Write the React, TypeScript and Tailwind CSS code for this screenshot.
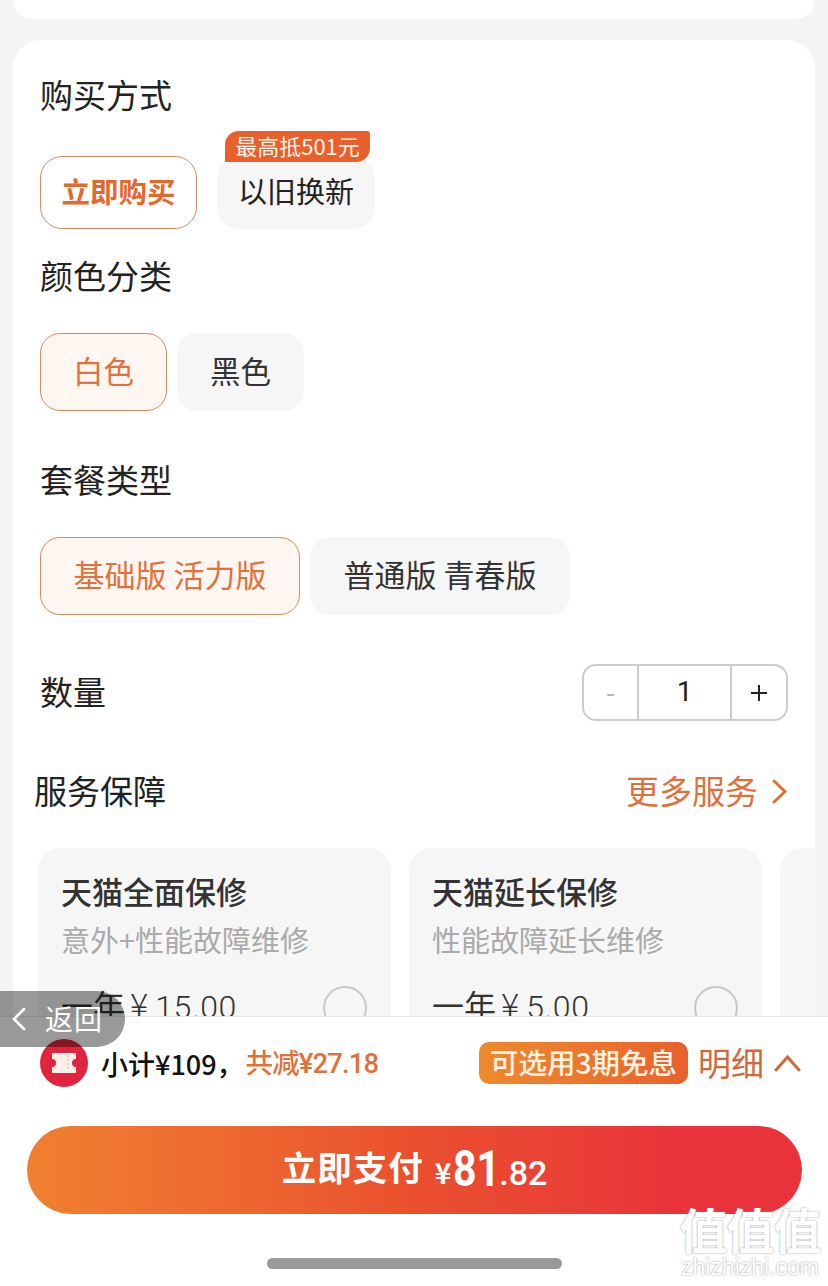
import { ChevronLeft } from "lucide-react";

const FONT = "font-['Noto_Sans_CJK_SC','Noto_Sans',sans-serif]";

const ServiceCard = ({ title, sub, plan, price }: { title: string; sub: string; plan: string; price: string }) => {
  return (
    <div className="w-[353px] h-[220px] shrink-0 rounded-t-[22px] bg-[#f6f6f6] pl-[23px] pr-6 pt-[22px]">
      <div className="text-[31px] leading-[42px] font-medium text-[#333]">{title}</div>
      <div className="mt-[6px] text-[29px] leading-[42px] text-[#aaaaaa] whitespace-nowrap">{sub}</div>
      <div className="mt-[24px] flex items-center justify-between">
        <span className="flex items-baseline -translate-y-[2px] text-[32px] leading-[44px] text-[#333] whitespace-nowrap">
          {plan}
          <span className="ml-[5px] text-[34px] font-light">¥</span>
          <span className="ml-[7px] text-[32px] tracking-[0.6px] font-['Roboto'] font-light">{price}</span>
        </span>
        <span className="w-[44px] h-[44px] rounded-full border-2 border-[#c8c8c8]" />
      </div>
    </div>
  );
};

export default function App() {
  return (
    <div className={`${FONT} relative w-[828px] h-[1286px] overflow-hidden bg-[#f4f4f4] flex flex-col`}>
      <div className="flex-1 min-h-0 overflow-hidden px-[13px]">
        <div className="h-[19px] bg-white rounded-b-[22px]" />
        <div className="mt-[21px] h-[1000px] bg-white rounded-t-[28px] pl-[27px] pr-[27px]">
          <h2 className="pt-[32px] text-[33px] leading-[44px] text-[#222]">购买方式</h2>
          <div className="mt-[40px] flex gap-5">
            <button className="w-[157px] h-[73px] pb-[3px] rounded-[22px] border-[1.5px] border-[#d88a5e] bg-white text-[28.5px] font-bold text-[#e5682e]">
              立即购买
            </button>
            <div className="relative">
              <button className="w-[158px] h-[73px] pb-[3px] rounded-[22px] bg-[#f6f6f6] text-[29px] text-[#222]">
                以旧换新
              </button>
              <span className="absolute left-[8px] -top-[25px] w-[145px] h-[31px] rounded-tl-[14px] rounded-tr-[3px] rounded-br-[14px] bg-[#e9602c] text-center text-[22px] leading-[28px] text-[#fff3e8] whitespace-nowrap">
                最高抵501元
              </span>
            </div>
          </div>
          <h2 className="mt-[24px] text-[33px] leading-[44px] text-[#222]">颜色分类</h2>
          <div className="mt-[36px] flex gap-[10px]">
            <button className="w-[127px] h-[78px] pb-[3px] rounded-[20px] border-[1.5px] border-[#d98a5e] bg-[#fdf6f1] text-[30.5px] text-[#e2713b]">
              白色
            </button>
            <button className="w-[127px] h-[78px] pb-[3px] rounded-[20px] bg-[#f6f6f6] text-[30.5px] text-[#333]">
              黑色
            </button>
          </div>
          <h2 className="mt-[46px] text-[33px] leading-[44px] text-[#222]">套餐类型</h2>
          <div className="mt-[36px] flex gap-[10px]">
            <button className="w-[260px] h-[78px] pb-[3px] rounded-[20px] border-[1.5px] border-[#d98a5e] bg-[#fdf6f1] text-[31px] text-[#e2713b]">
              基础版 活力版
            </button>
            <button className="w-[260px] h-[78px] pb-[3px] rounded-[20px] bg-[#f6f6f6] text-[31px] text-[#333]">
              普通版 青春版
            </button>
          </div>
          <div className="mt-[49px] flex items-center justify-between">
            <span className="pb-[3px] text-[33px] leading-[44px] text-[#222]">数量</span>
            <div className="flex w-[206px] h-[57px] rounded-[14px] border-2 border-[#cccccc] text-[#222]">
              <span className="w-[55px] pb-[4px] flex items-center justify-center text-[26px] text-[#b5b5b5] border-r-2 border-[#cccccc]">-</span>
              <span className="flex-1 pb-[1px] flex items-center justify-center text-[28px] font-['Roboto']">1</span>
              <span className="w-[56px] flex items-center justify-center border-l-2 border-[#cccccc]">
                <svg width="16" height="16" viewBox="0 0 16 16" stroke="#222" strokeWidth="2">
                  <path d="M0 8h16M8 0v16" />
                </svg>
              </span>
            </div>
          </div>
          <div className="mt-[47px] -ml-[6px] flex items-center justify-between">
            <span className="text-[33px] leading-[44px] text-[#222]">服务保障</span>
            <span className="flex items-center text-[33px] leading-[44px] text-[#e0703a]">
              更多服务
              <svg className="ml-[13px] mt-[2px]" width="17" height="25" viewBox="0 0 17 25" fill="none" stroke="#e0703a" strokeWidth="3" strokeLinecap="round">
                <path d="M3 2l11 10.5L3 23" />
              </svg>
            </span>
          </div>
          <div className="mt-[36px] -ml-[2px] flex gap-[18px]">
            <ServiceCard title="天猫全面保修" sub="意外+性能故障维修" plan="一年" price="15.00" />
            <ServiceCard title="天猫延长保修" sub="性能故障延长维修" plan="一年" price="5.00" />
            <div className="w-[35px] h-[220px] shrink-0 rounded-tl-[22px] bg-[#f6f6f6]" />
          </div>
        </div>
      </div>

      <div className="h-[270px] shrink-0 bg-white border-t border-[#e6e6e6]">
        <div className="mt-[22px] pl-[40px] pr-[27px] flex items-center">
          <span className="w-[48px] h-[48px] rounded-full bg-[#e0263f] flex items-center justify-center">
            <svg width="26" height="22" viewBox="0 0 26 22">
              <path
                d="M2 1h22a1 1 0 0 1 1 1v5a4 4 0 0 0 0 8v5a1 1 0 0 1-1 1H2a1 1 0 0 1-1-1v-5a4 4 0 0 0 0-8V2a1 1 0 0 1 1-1z"
                fill="#fdeee9"
              />
              <path d="M17 3v16" stroke="#f0cfc8" strokeWidth="2" strokeDasharray="2 2" />
            </svg>
          </span>
          <span className="ml-[13px] mt-[2px] text-[27px] font-medium text-[#111] whitespace-pre">小计¥109，</span>
          <span className="ml-[2px] mt-[2px] text-[27.5px] tracking-[-0.9px] font-medium text-[#e2703a] whitespace-pre font-['Roboto','Noto_Sans_CJK_SC',sans-serif]">共减¥27.18</span>
          <span className="ml-auto h-[42px] w-[209px] rounded-[10px] bg-gradient-to-r from-[#ee8a2e] to-[#e9602c] text-center text-[28.5px] leading-[39px] font-medium text-[#fff3e6] whitespace-nowrap">
            可选用3期免息
          </span>
          <span className="ml-[10px] pb-[2px] text-[33px] leading-[44px] text-[#d0693a]">明细</span>
          <svg className="ml-[10px]" width="27" height="19" viewBox="0 0 27 19" fill="none" stroke="#d0693a" strokeWidth="3" strokeLinecap="round">
            <path d="M2 16L13.5 3 25 16" />
          </svg>
        </div>
        <button className="mt-[39px] ml-[27px] w-[775px] h-[88px] pb-[4px] rounded-full bg-gradient-to-r from-[#f08030] via-[#ea4f2e] via-50% to-[#e9323a] to-85% flex items-baseline justify-center text-white font-bold">
          <span className="text-[34.5px] leading-[80px] tracking-[1px]">立即支付</span>
          <span className="ml-[11px] translate-y-[3px] text-[28px]">¥</span>
          <span className="inline-block w-[44px] ml-[2px] translate-y-[5px] text-[50px] leading-none font-['Roboto'] font-bold scale-x-[0.82] origin-left">81</span>
          <span className="ml-[2px] translate-y-[4px] text-[34px] leading-none font-['Roboto'] font-medium">.82</span>
        </button>
        <div className="mt-[44px] ml-[267px] w-[295px] h-[11px] rounded-full bg-[#999999]" />
      </div>

      <div className="absolute left-0 top-[991px] w-[125px] h-[56px] rounded-r-[28px] bg-black/40 flex items-center text-white">
        <ChevronLeft className="-ml-[1px] w-[40px] h-[40px]" strokeWidth={1.6} />
        <span className="ml-[6px] pb-[2px] text-[28px] tracking-[1px]">返回</span>
      </div>

      <div className="absolute right-[6px] bottom-[7px] w-[144px] flex flex-col items-center text-white [text-shadow:0_0_2px_#8a8a8a]">
        <span className="text-[48px] leading-[50px] tracking-[-1px] whitespace-nowrap font-bold">值值值</span>
        <span className="mt-[2px] text-[23px] leading-[24px] font-['Liberation_Sans']">zhizhizhi.com</span>
      </div>
    </div>
  );
}
